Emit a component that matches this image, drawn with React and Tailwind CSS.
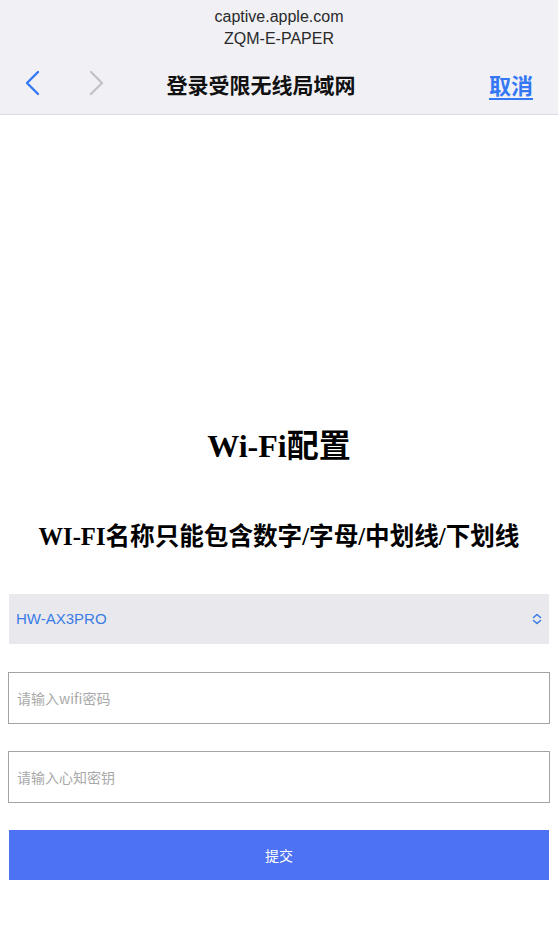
import React from "react";

export default function App() {
  return (
    <div className="w-[558px] h-[932px] bg-white overflow-hidden font-['Liberation_Sans',Arial,'Noto_Sans_CJK_SC',sans-serif]">
      <div className="h-[115px] bg-[#f0f0f5] border-b border-[#dcdce0] flex flex-col">
        <div className="pt-[6px] flex flex-col items-center text-[16px] leading-[22px] text-[#2a2a2a]">
          <div>captive.apple.com</div>
          <div>ZQM-E-PAPER</div>
        </div>
        <div className="relative flex items-center h-[48px] mt-[9px]">
          <div className="flex items-center pl-[24px] gap-[47px]">
            <svg width="17" height="26" viewBox="0 0 17 26" fill="none">
              <path d="M14 2 L3 13 L14 24" stroke="#3478f6" strokeWidth="2.4" strokeLinecap="round" strokeLinejoin="round" />
            </svg>
            <svg width="17" height="26" viewBox="0 0 17 26" fill="none">
              <path d="M3 2 L14 13 L3 24" stroke="#c3c3c7" strokeWidth="2.4" strokeLinecap="round" strokeLinejoin="round" />
            </svg>
          </div>
          <div className="absolute left-0 right-[36px] pt-[3px] text-center text-[21px] font-bold text-[#111] pointer-events-none font-['Noto_Sans_CJK_SC',sans-serif]">
            登录受限无线局域网
          </div>
          <div className="ml-auto pr-[25px] pt-[2px] text-[22px] font-bold text-[#3478f6] underline underline-offset-[4px] font-['Noto_Sans_CJK_SC',sans-serif]">
            取消
          </div>
        </div>
      </div>

      <div className="px-[8px] flex flex-col">
        <h1 className="mt-[315px] text-center text-[32px] leading-[32px] font-bold text-black font-['Liberation_Serif','Times_New_Roman','Noto_Sans_CJK_SC',serif]">
          Wi-Fi配置
        </h1>
        <h2 className="mt-[63px] text-center text-[24.6px] leading-[24px] font-bold text-black font-['Liberation_Serif','Times_New_Roman','Noto_Sans_CJK_SC',serif]">
          WI-FI名称只能包含数字/字母/中划线/下划线
        </h2>
        <div className="mt-[45px] mx-px h-[50px] bg-[#e9e9ed] flex items-center justify-between px-[7px]">
          <span className="text-[15px] text-[#3a7ce6]">HW-AX3PRO</span>
          <svg width="10" height="12" viewBox="0 0 10 12" fill="none">
            <path d="M1.5 4.5 L5 1.5 L8.5 4.5 M1.5 7.5 L5 10.5 L8.5 7.5" stroke="#3a7ce6" strokeWidth="1.6" strokeLinecap="round" strokeLinejoin="round" />
          </svg>
        </div>
        <div className="mt-[28px] h-[52px] border-[1.5px] border-[#a3a3a3] flex items-center pl-[8px] text-[14px] text-[#a9a9a9] font-['Noto_Sans_CJK_SC',sans-serif]">
          请输入wifi密码
        </div>
        <div className="mt-[27px] h-[52px] border-[1.5px] border-[#a3a3a3] flex items-center pl-[8px] text-[14px] text-[#a9a9a9] font-['Noto_Sans_CJK_SC',sans-serif]">
          请输入心知密钥
        </div>
        <div className="mt-[27px] mx-px h-[50px] bg-[#4e72f4] flex items-center justify-center text-[14px] text-white font-['Noto_Sans_CJK_SC',sans-serif]">
          提交
        </div>
      </div>
    </div>
  );
}
